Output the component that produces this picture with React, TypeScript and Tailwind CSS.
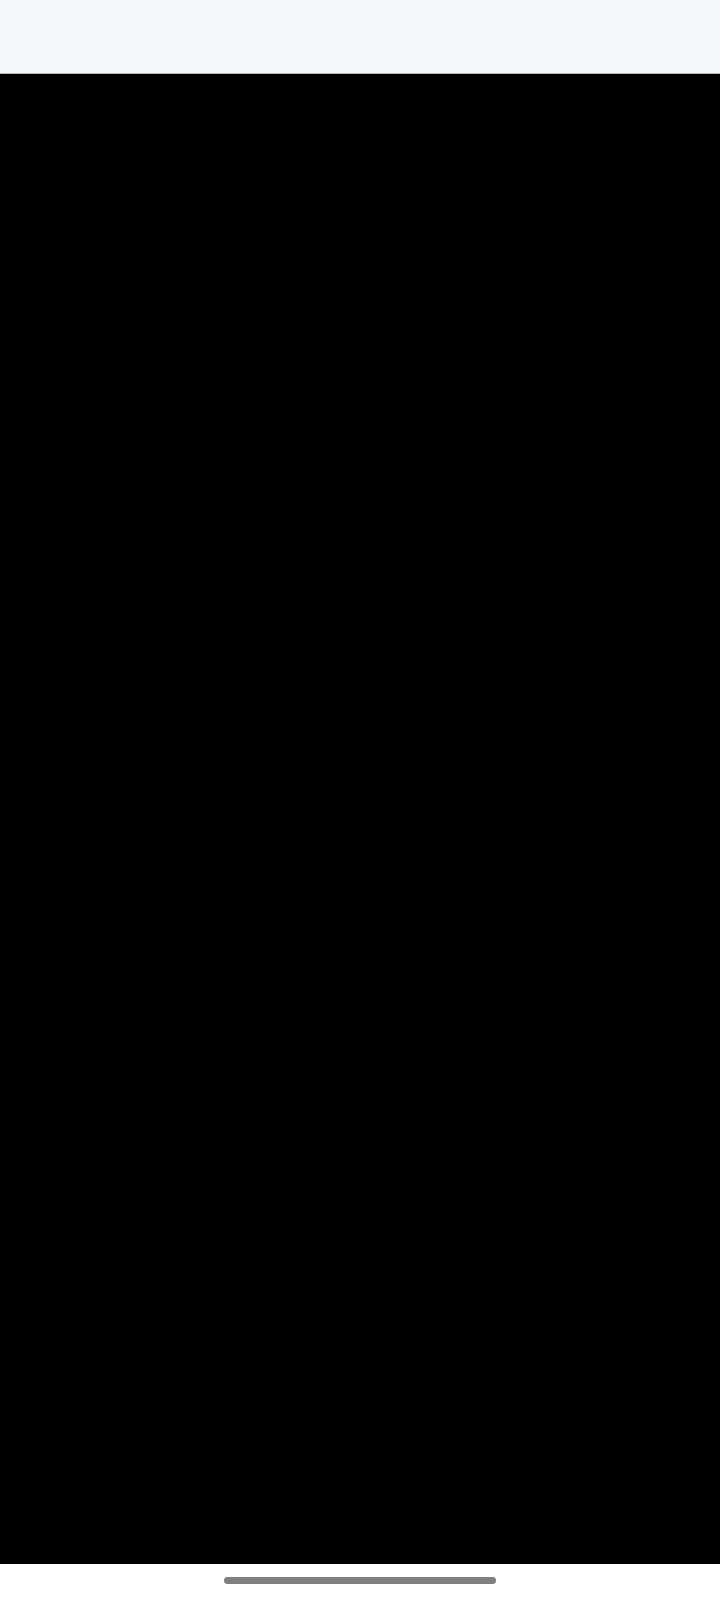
import React from "react";

export default function App() {
  return (
    <div className="w-[720px] h-[1600px] flex flex-col bg-white overflow-hidden">
      <div className="h-[74px] shrink-0 bg-[#f6f7f9] border-b border-[#b8b8b8]" />
      <div className="h-[1490px] shrink-0 bg-black" />
      <div className="flex-1 flex justify-center pt-[13px]">
        <div className="w-[272px] h-[7px] rounded-full bg-[#808080]" />
      </div>
    </div>
  );
}
